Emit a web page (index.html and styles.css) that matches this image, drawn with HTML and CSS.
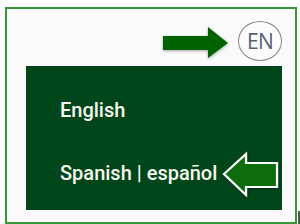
FILE: index.html
```html
<!DOCTYPE html>
<html>
<head>
<meta charset="utf-8">
<link rel="stylesheet" href="styles.css">
</head>
<body>
<div class="page">
  <div class="frame">
    <div class="header">
      <svg class="arrow-right" width="74" height="40" viewBox="0 0 74 40">
        <defs>
          <filter id="sh" x="-20%" y="-30%" width="140%" height="160%">
            <feGaussianBlur in="SourceAlpha" stdDeviation="1.6"/>
            <feOffset dx="0" dy="1" result="b"/>
            <feFlood flood-color="#000" flood-opacity="0.35"/>
            <feComposite in2="b" operator="in"/>
            <feMerge><feMergeNode/><feMergeNode in="SourceGraphic"/></feMerge>
          </filter>
        </defs>
        <polygon filter="url(#sh)" fill="#006300" points="5,13 50,13 50,4 70,20 50,35 50,27 5,27"/>
      </svg>
      <div class="lang-badge">EN</div>
    </div>
    <div class="menu">
      <div class="item">English</div>
      <div class="item item-es">
        <span>Spanish | español</span>
        <svg class="arrow-left" width="60" height="48" viewBox="0 0 60 48">
          <defs>
            <filter id="sh2" x="-20%" y="-30%" width="140%" height="160%">
              <feGaussianBlur in="SourceAlpha" stdDeviation="1.4"/>
              <feOffset dx="1" dy="1" result="b"/>
              <feFlood flood-color="#000" flood-opacity="0.45"/>
              <feComposite in2="b" operator="in"/>
              <feMerge><feMergeNode/><feMergeNode in="SourceGraphic"/></feMerge>
            </filter>
          </defs>
          <polygon filter="url(#sh2)" fill="#0b6d0b" stroke="#ffffff" stroke-width="2.2" stroke-linejoin="miter" points="3,25 25,5 25,14 56,14 56,38 25,38 25,46"/>
        </svg>
      </div>
    </div>
  </div>
  <div class="edge"></div>
</div>
</body>
</html>
```
FILE: styles.css
```css
html, body {
  margin: 0;
  padding: 0;
  background: #ffffff;
}
body {
  width: 300px;
  height: 224px;
  overflow: hidden;
}
.page {
  display: flex;
  align-items: flex-end;
  padding: 4px 0 0 5px;
  height: 220px;
}
.frame {
  box-sizing: border-box;
  width: 292px;
  height: 217px;
  border: 2px solid #36963a;
  background: #fafafa;
  display: flex;
  flex-direction: column;
}
.edge {
  width: 2px;
  height: 16px;
  margin-left: 1px;
  margin-bottom: -3px;
  background: #555;
}
.header {
  display: flex;
  justify-content: flex-end;
  align-items: flex-start;
  padding: 12px 13px 0 0;
  height: 45px;
  gap: 6px;
}
.arrow-right {
  margin-top: 2px;
  display: block;
}
.lang-badge {
  box-sizing: border-box;
  width: 44px;
  height: 40px;
  border: 1.6px solid #858585;
  border-radius: 50%;
  display: flex;
  align-items: center;
  justify-content: center;
  font-family: "Open Sans", sans-serif;
  font-size: 21px;
  color: #566075;
  letter-spacing: -0.8px;
  background: #fcfcfc;
}
.menu {
  margin-left: 19px;
  width: 256px;
  height: 144px;
  background: #01461b;
  box-sizing: border-box;
  padding: 28px 0 0 34px;
  display: flex;
  flex-direction: column;
  gap: 23px;
}
.item {
  font-family: Roboto, "Noto Sans", sans-serif;
  font-weight: 500;
  font-size: 20px;
  line-height: 32px;
  color: #f6f6ee;
  display: flex;
  align-items: center;
}
.item-es {
  gap: 4px;
  height: 48px;
}
.arrow-left {
  display: block;
  flex: none;
}
```
